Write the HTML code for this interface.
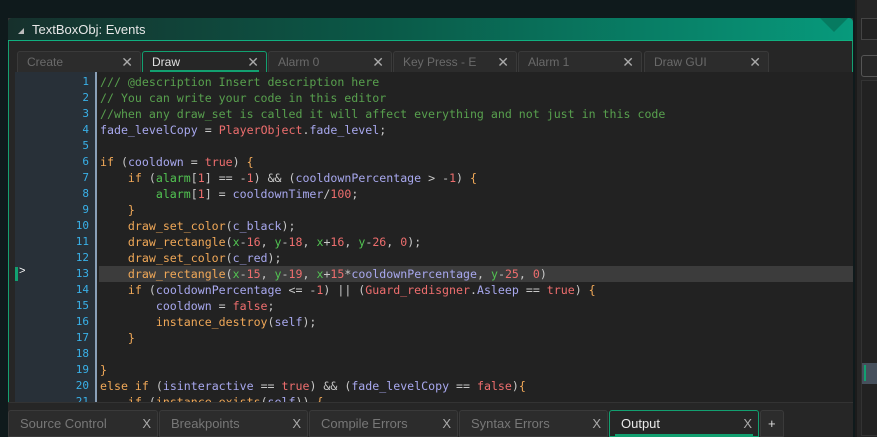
<!DOCTYPE html>
<html><head><meta charset="utf-8"><style>
*{margin:0;padding:0;box-sizing:border-box}
body{width:877px;height:437px;overflow:hidden;background:#0f1a1c;font-family:"Liberation Sans",sans-serif;position:relative}
.win{position:absolute;left:8px;top:18px;width:845px;height:419px;background:#262626;border:1px solid #333}
.title{position:absolute;left:8px;top:18px;width:845px;height:23px;background:linear-gradient(90deg,#16302c 0%,#0a5a48 45%,#079a7c 100%);border-bottom:1px solid #10b080;color:#e8e8e8;font-size:13px;line-height:23px;padding-left:24px;border-radius:4px 4px 0 0}
.title:before{content:"";position:absolute;left:10px;top:10px;border-left:6px solid transparent;border-bottom:6px solid #bbb}
.panel{position:absolute;left:8px;top:41px;width:845px;height:365px;border:1px solid #15a070;border-top:none;background:#262626;border-radius:0 0 4px 4px}
.tabs{position:absolute;top:51px;height:21px}
.tab{position:absolute;top:0;height:21px;background:#2c2c2c;border:1px solid #3a3a3a;border-bottom:none;color:#6a6a6a;font-size:12px;line-height:20px;padding-left:9px;border-radius:3px 3px 0 0}
.tab .x{position:absolute;right:7px;top:0;color:#aaa;font-size:14px}
.tab.act{background:#262626;border-color:#12a070;color:#e0e0e0}
.tab.act:after{content:"";position:absolute;left:7px;right:7px;bottom:0;height:2px;background:#12a070}
.ed{position:absolute;left:15px;top:72px;width:838px;height:330px;background:#222;overflow:hidden}
.gut{position:absolute;left:0;top:0;width:82px;height:330px;background:#283038;border-right:2px solid #8aa0b8}
.ln{position:absolute;left:32px;width:42px;text-align:right;color:#39b0e8;font:11px "DejaVu Sans Mono",monospace;line-height:16px}
.code{position:absolute;left:85px;top:2px;font:11.6px "DejaVu Sans Mono",monospace;line-height:16px;white-space:pre;color:#c8c8c8}
.hl{position:absolute;left:84px;top:194px;width:760px;height:16px;background:#3c3c3c}
.c{color:#58a04e}.v{color:#a8a8ee}.r{color:#ee6e6e}.k{color:#f0a858}.g{color:#52c452}.n{color:#ee6e6e}
.btabs{position:absolute;top:410px;height:27px}
.bt{position:absolute;top:0;height:27px;background:#2c2c2c;border:1px solid #3a3a3a;color:#777;font-size:13px;line-height:25px;padding-left:11px;border-radius:3px 3px 0 0}
.bt .x{position:absolute;right:6px;top:0;color:#aaa}
.bt.act{color:#e8e8e8;border-color:#12a070;background:#262626}
.bt.act:after{content:"";position:absolute;left:5px;right:5px;bottom:0;height:2px;background:#12a070}
.side{position:absolute;left:855px;top:0;width:22px;height:437px;background:#262626;border-left:2px solid #1b1b1b}
</style></head><body>
<div class="win"></div>
<div class="title">TextBoxObj: Events</div>
<div style="position:absolute;left:820px;top:18px;width:0;height:0;border-left:14px solid transparent;border-right:14px solid transparent;border-top:14px solid #067a60"></div>
<div class="panel"></div>
<div class="tabs">
<div class="tab" style="left:17px;width:124px">Create<span class="x">✕</span></div>
<div class="tab act" style="left:142px;width:125px">Draw<span class="x">✕</span></div>
<div class="tab" style="left:268px;width:124px">Alarm 0<span class="x">✕</span></div>
<div class="tab" style="left:393px;width:124px">Key Press - E<span class="x">✕</span></div>
<div class="tab" style="left:518px;width:124px">Alarm 1<span class="x">✕</span></div>
<div class="tab" style="left:644px;width:125px">Draw GUI<span class="x">✕</span></div>
</div>
<div class="ed">
<div class="gut"></div>
<div class="hl"></div>
<div style="position:absolute;left:0;top:195px;width:3px;height:14px;background:#12a070"></div>
<div style="position:absolute;left:4px;top:193px;color:#fff;font-size:11px">&gt;</div>
<div class="ln" style="top:2px">1<br>2<br>3<br>4<br>5<br>6<br>7<br>8<br>9<br>10<br>11<br>12<br>13<br>14<br>15<br>16<br>17<br>18<br>19<br>20<br>21</div>
<div class="code"><span class="c">/// @description Insert description here
// You can write your code in this editor
//when any draw_set is called it will affect everything and not just in this code</span>
<span class="v">fade_levelCopy</span> = <span class="r">PlayerObject</span>.<span class="v">fade_level</span>;

<span class="k">if</span> (<span class="v">cooldown</span> = <span class="r">true</span>) <span class="k">{</span>
    <span class="k">if</span> (<span class="g">alarm</span>[<span class="n">1</span>] == -<span class="n">1</span>) &amp;&amp; (<span class="v">cooldownPercentage</span> &gt; -<span class="n">1</span>) <span class="k">{</span>
        <span class="g">alarm</span>[<span class="n">1</span>] = <span class="v">cooldownTimer</span>/<span class="n">100</span>;
    <span class="k">}</span>
    <span class="k">draw_set_color</span>(<span class="v">c_black</span>);
    <span class="k">draw_rectangle</span>(<span class="g">x</span>-<span class="n">16</span>, <span class="g">y</span>-<span class="n">18</span>, <span class="g">x</span>+<span class="n">16</span>, <span class="g">y</span>-<span class="n">26</span>, <span class="n">0</span>);
    <span class="k">draw_set_color</span>(<span class="v">c_red</span>);
    <span class="k">draw_rectangle</span>(<span class="g">x</span>-<span class="n">15</span>, <span class="g">y</span>-<span class="n">19</span>, <span class="g">x</span>+<span class="n">15</span>*<span class="v">cooldownPercentage</span>, <span class="g">y</span>-<span class="n">25</span>, <span class="n">0</span>)
    <span class="k">if</span> (<span class="v">cooldownPercentage</span> &lt;= -<span class="n">1</span>) || (<span class="r">Guard_redisgner</span>.<span class="v">Asleep</span> == <span class="r">true</span>) <span class="k">{</span>
        <span class="v">cooldown</span> = <span class="r">false</span>;
        <span class="k">instance_destroy</span>(<span class="v">self</span>);
    <span class="k">}</span>

<span class="k">}</span>
<span class="k">else if</span> (<span class="v">isinteractive</span> == <span class="r">true</span>) &amp;&amp; (<span class="v">fade_levelCopy</span> == <span class="r">false</span>)<span class="k">{</span>
    <span class="k">if</span> (<span class="k">instance_exists</span>(<span class="v">self</span>)) <span class="k">{</span></div>
</div>
<div style="position:absolute;left:8px;top:402px;width:845px;height:35px;background:#262626;border-top:1px solid #333"></div>
<div class="btabs">
<div class="bt" style="left:8px;width:150px">Source Control<span class="x">X</span></div>
<div class="bt" style="left:159px;width:149px">Breakpoints<span class="x">X</span></div>
<div class="bt" style="left:309px;width:149px">Compile Errors<span class="x">X</span></div>
<div class="bt" style="left:459px;width:149px">Syntax Errors<span class="x">X</span></div>
<div class="bt act" style="left:609px;width:150px">Output<span class="x">X</span></div>
<div class="bt" style="left:760px;width:24px;color:#ddd;padding-left:7px">+</div>
</div>
<div class="side">
<div style="position:absolute;left:4px;top:18px;width:20px;height:22px;border:1px solid #444;background:#222"></div>
<div style="position:absolute;left:4px;top:55px;width:20px;height:22px;border:1px solid #555;border-radius:3px"></div>
<div style="position:absolute;left:4px;top:80px;width:20px;height:356px;background:#222;border:1px solid #333"></div>
<div style="position:absolute;left:5px;top:363px;width:20px;height:21px;background:#46505c"></div>
<div style="position:absolute;left:7px;top:365px;width:2px;height:16px;background:#12a070"></div>
</div>
</body></html>
